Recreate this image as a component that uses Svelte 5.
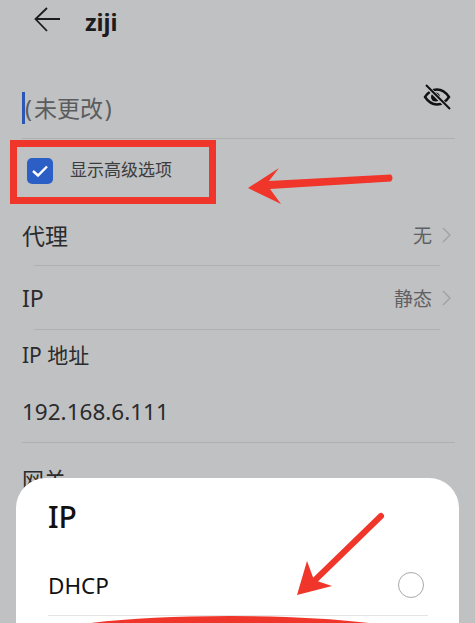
<script lang="ts">
  const rows = [
    { label: "代理", value: "无" },
    { label: "IP", value: "静态" },
  ];
</script>

<div class="page">
  <header class="topbar">
    <svg class="back" width="27" height="25" viewBox="0 0 27 25">
      <path d="M26 12H2M13 1 1.500 12 13 24" fill="none" stroke="#1c1c1e" stroke-width="1.800" />
    </svg>
    <span class="title">ziji</span>
  </header>

  <div class="field">
    <span class="caret"></span>
    <span class="placeholder">( 未更改 )</span>
    <svg class="eye" width="28" height="26" viewBox="0 0 28 26">
      <path d="M2 13C6 7 10 5.500 14 5.500S22 7 26 13C22 19 18 20.500 14 20.500S6 19 2 13Z" fill="none" stroke="#111" stroke-width="2.400" />
      <circle cx="12.500" cy="13" r="4.500" fill="#111" />
      <path d="M3 1.500 26 24.500" stroke="#c0c1c3" stroke-width="4" />
      <path d="M3 1 27 25" stroke="#111" stroke-width="2" />
    </svg>
  </div>

  <div class="advanced">
    <span class="check">
      <svg width="18" height="14" viewBox="0 0 18 14">
        <path d="M2 7 7 11.500 16 2.500" fill="none" stroke="#fff" stroke-width="2.400" />
      </svg>
    </span>
    <span class="advanced-label">显示高级选项</span>
  </div>

  {#each rows as row}
    <div class="row">
      <span class="row-label">{row.label}</span>
      <span class="value">
        {row.value}
        <svg width="9" height="16" viewBox="0 0 9 16">
          <path d="M1 1 8 8 1 15" fill="none" stroke="#a2a3a5" stroke-width="1.500" />
        </svg>
      </span>
    </div>
  {/each}

  <div class="ip-label">IP 地址</div>
  <div class="ip-value">192.168.6.111</div>
  <div class="gateway">网关</div>

  <section class="sheet">
    <h2>IP</h2>
    <div class="option">
      <span>DHCP</span>
      <span class="radio"></span>
    </div>
    <div class="option-line"></div>
  </section>

  <div class="red-box"></div>
  <svg class="marks" width="475" height="623" viewBox="0 0 475 623">
    <path d="M248 188 279 168 269 181 391 174.500Q394 178 391 181.500L270 189 281 204Z" fill="#f0352b" />
    <path d="M381 516 312 583" stroke="#f0352b" stroke-width="6" stroke-linecap="round" />
    <path d="M297 595 307 561 314 580 332 586Z" fill="#f0352b" />
    <ellipse cx="230" cy="646" rx="200" ry="25" fill="none" stroke="#f0352b" stroke-width="10" />
  </svg>
</div>

<style>
  :global(body) {
    margin: 0;
    background: #c0c1c3;
  }

  .page {
    position: relative;
    width: 475px;
    height: 623px;
    overflow: hidden;
    background: #c0c1c3;
    color: #2a2b2d;
    font-family: "Noto Sans", "Noto Sans CJK SC", sans-serif;
  }

  .topbar {
    display: flex;
    align-items: center;
    gap: 24px;
    height: 40px;
    padding-left: 34px;
  }

  .title {
    font-size: 23.500px;
    font-weight: 700;
    line-height: 40px;
    color: #1c1c1e;
    margin-top: 4px;
  }

  .back {
    margin-top: -1px;
  }

  .field {
    display: flex;
    align-items: flex-start;
    height: 46px;
    margin: 52px 20px 0 22px;
    border-bottom: 1px solid #aeafb1;
  }

  .caret {
    width: 3px;
    height: 32px;
    background: #2b57b5;
    flex: none;
  }

  .placeholder {
    font-size: 23px;
    line-height: 32px;
    word-spacing: -4px;
    color: #5b5c5e;
  }

  .eye {
    margin: -8px 4px 0 auto;
  }

  .advanced {
    display: flex;
    align-items: center;
    gap: 17px;
    height: 65px;
    padding-left: 27px;
  }

  .check {
    display: flex;
    align-items: center;
    justify-content: center;
    width: 26px;
    height: 26px;
    margin-top: -2px;
    border-radius: 5px;
    background: #2b5fc6;
  }

  .advanced-label {
    font-size: 17px;
    line-height: 24px;
    margin-top: -3px;
    color: #3c3d3f;
  }

  .row {
    display: flex;
    align-items: center;
    justify-content: space-between;
    height: 61px;
    margin: 0 35px 0 34px;
    font-size: 23px;
    border-bottom: 1px solid #aeafb1;
  }

  .row + .row {
    height: 63px;
  }

  .row-label {
    margin-left: -12px;
  }

  .value {
    display: flex;
    align-items: center;
    gap: 10px;
    font-size: 19px;
    color: #5f6062;
    margin-right: -11px;
  }

  .ip-label {
    margin: 10px 0 0 22px;
    font-size: 21px;
    line-height: 30px;
  }

  .ip-value {
    margin: 27px 20px 0 22px;
    padding-bottom: 15px;
    font-size: 22.500px;
    line-height: 30px;
    border-bottom: 1px solid #aeafb1;
  }

  .gateway {
    margin: 21px 0 0 22px;
    font-size: 22px;
    line-height: 30px;
  }

  .sheet {
    position: absolute;
    left: 16px;
    right: 16px;
    top: 478px;
    bottom: -40px;
    padding: 18px 31px 0 32px;
    background: #fff;
    border-radius: 30px;
    color: #111;
  }

  h2 {
    margin: 0;
    font-size: 30px;
    font-weight: 500;
    line-height: 42px;
  }

  .option {
    display: flex;
    align-items: center;
    justify-content: space-between;
    margin-top: 27px;
    height: 40px;
    font-size: 22.500px;
  }

  .radio {
    width: 24px;
    height: 24px;
    border: 1.500px solid #a9a9a9;
    border-radius: 50%;
    margin-right: 4px;
  }

  .option-line {
    margin-top: 10px;
    height: 1px;
    background: #e4e4e6;
  }

  .red-box {
    position: absolute;
    left: 10px;
    top: 140px;
    width: 192px;
    height: 50px;
    border: 7px solid #f0352b;
  }

  .marks {
    position: absolute;
    inset: 0;
    pointer-events: none;
  }
</style>
